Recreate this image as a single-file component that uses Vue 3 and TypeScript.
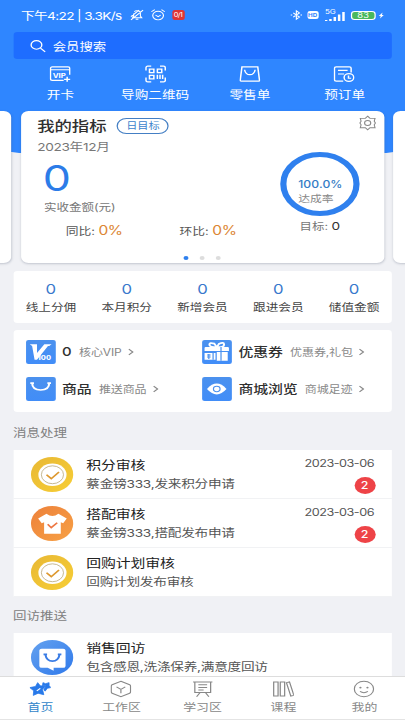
<script setup lang="ts">
interface Stat { label: string; value: number }
interface Shortcut { icon: string; title: string; note: string }
interface Message { icon: string; title: string; detail: string; date?: string; count?: number }

const actions = [
  { icon: 'vip', label: '开卡' },
  { icon: 'qr', label: '导购二维码' },
  { icon: 'bag', label: '零售单' },
  { icon: 'order', label: '预订单' },
]
const stats: Stat[] = ['线上分佣', '本月积分', '新增会员', '跟进会员', '储值金额'].map(label => ({ label, value: 0 }))
const shortcuts: Shortcut[] = [
  { icon: 'v100', title: '0', note: '核心VIP' },
  { icon: 'gift', title: '优惠券', note: '优惠券,礼包' },
  { icon: 'goods', title: '商品', note: '推送商品' },
  { icon: 'eye', title: '商城浏览', note: '商城足迹' },
]
const messages: Message[] = [
  { icon: 'check', title: '积分审核', detail: '蔡金镑333,发来积分申请', date: '2023-03-06', count: 2 },
  { icon: 'shirt', title: '搭配审核', detail: '蔡金镑333,搭配发布申请', date: '2023-03-06', count: 2 },
  { icon: 'check', title: '回购计划审核', detail: '回购计划发布审核' },
]
const tabs = [
  { icon: 'home', label: '首页' },
  { icon: 'work', label: '工作区' },
  { icon: 'study', label: '学习区' },
  { icon: 'course', label: '课程' },
  { icon: 'mine', label: '我的' },
]
</script>

<template>
  <div class="screen">
    <header class="top">
      <div class="status">
        <span class="clock">下午4:22 | 3.3K/s</span>
        <svg class="s-mute" viewBox="0 0 24 24"><path d="M5 17h14l-2-3V9a5 5 0 0 0-9-3M7 9v5l-2 3M10 20h4M3 21 21 3M3 15 15 3" /></svg>
        <svg class="s-alarm" viewBox="0 0 24 24"><circle cx="12" cy="13" r="8" /><path d="m8 12 4 3 4-3M2 6l5-4M22 6l-5-4" /></svg>
        <span class="red-tag">0/1</span>
        <span class="grow"></span>
        <svg class="s-bt" viewBox="0 0 24 24"><path d="m6 7 12 10-6 5V2l6 5L6 17M1 12h3M20 12h3" /></svg>
        <span class="hd">HD</span>
        <svg class="s-signal" viewBox="0 0 18 14"><text x="0" y="6">5G</text><path d="M1 13v-1M4.500 13v-2M8 13V9M11.500 13V6.500M15 13V4" /></svg>
        <span class="battery">83</span>
        <svg class="s-bolt" viewBox="0 0 10 14"><path d="M7 1 1 8h3l-1 5 6-7H6z" /></svg>
      </div>
      <div class="search">
        <svg viewBox="0 0 24 24"><circle cx="10" cy="10" r="8" /><path d="m16 16 7 7" /></svg>
        <span>会员搜索</span>
      </div>
      <nav class="actions">
        <div v-for="a in actions" :key="a.label" class="action">
          <svg v-if="a.icon === 'vip'" viewBox="0 0 24 24"><path d="M23 13V4a2 2 0 0 0-2-2H3a2 2 0 0 0-2 2v15a2 2 0 0 0 2 2h13M1 6h22M20 16v7M16.500 19.500h7" /><text x="3.500" y="17">VIP</text></svg>
          <svg v-else-if="a.icon === 'qr'" viewBox="0 0 24 24"><path d="M1 7V3a2 2 0 0 1 2-2h4M17 1h4a2 2 0 0 1 2 2v4M1 17v4a2 2 0 0 0 2 2h4M17 23h4a2 2 0 0 0 2-2v-4M5 5h5v5H5zM14 5h5v5h-5zM5 14h5v5H5zM14 13v6M17 13v6M20 13v6" /></svg>
          <svg v-else-if="a.icon === 'bag'" viewBox="0 0 24 24"><path d="M3 2h18l2 19q0 1-1 1H2q-1 0-1-1zM6 6q1 7 6 7t6-7" /></svg>
          <svg v-else viewBox="0 0 24 24"><path d="M11 22H3a2 2 0 0 1-2-2V4a2 2 0 0 1 2-2h15a2 2 0 0 1 2 2v6M5 7h11M5 12h7" /><circle cx="17.500" cy="17" r="5.500" /><path d="M17 14v4h3" /></svg>
          <span>{{ a.label }}</span>
        </div>
      </nav>
    </header>

    <section class="carousel">
      <div class="side"></div>
      <article class="target">
        <div class="target-main">
          <div class="target-title"><h2>我的指标</h2><span class="pill">日目标</span></div>
          <div class="month">2023年12月</div>
          <div class="amount">0</div>
          <div class="amount-label">实收金额(元)</div>
          <div class="ratios"><span>同比: <b>0%</b></span><span>环比: <b>0%</b></span></div>
        </div>
        <div class="target-side">
          <svg class="gear" viewBox="0 0 24 24"><path d="m12 1 3 3.500h6.500L20.500 9l1.500 3-1.500 3 1 4.500H15L12 23l-3-3.500H2.500L3.500 15 2 12l1.500-3-1-4.500H9z" /><circle cx="12" cy="12" r="4" /></svg>
          <div class="ring"><strong>100.0%</strong><span>达成率</span></div>
          <div class="goal">目标: <b>0</b></div>
        </div>
        <div class="dots"><i class="on"></i><i></i><i></i></div>
      </article>
      <div class="side"></div>
    </section>

    <section class="stats">
      <div v-for="s in stats" :key="s.label"><b>{{ s.value }}</b><span>{{ s.label }}</span></div>
    </section>

    <section class="shortcuts">
      <div v-for="s in shortcuts" :key="s.title" class="shortcut">
        <svg class="tile" viewBox="0 0 24 24">
          <template v-if="s.icon === 'v100'"><path class="fill" d="M3 4h6v9l6-9h6l-2 2h-1L9 20H7L5 6z" /><text x="9.500" y="20">100</text></template>
          <template v-else-if="s.icon === 'gift'"><path class="fill" d="M3 7h18q1 0 1 1v3H2V8q0-1 1-1zM12 12h9v9h-9zM2 13h9v7H2z" /><path class="line" d="M12 7Q6 7 6 4.500t4-1l2 3.500 2-3.500q4-2 4 1T12 7" /><path class="blue" d="M15.500 7v14M4 15h3M4 17h3M5.500 14v5M9 13v7" /></template>
          <path v-else-if="s.icon === 'goods'" class="line" d="M5 6q0 7 7 7t7-7M3.500 6h3M17.500 6h3" />
          <template v-else><path class="fill" d="M4 12q8-11 16 0-8 11-16 0" /><circle class="blue" cx="12" cy="12" r="2.700" /></template>
        </svg>
        <strong>{{ s.title }}</strong><span>{{ s.note }}</span>
        <svg class="arrow" viewBox="0 0 6 10"><path d="m1 1.500 4 3.500-4 3.500" /></svg>
      </div>
    </section>

    <h3 class="heading">消息处理</h3>
    <section class="list">
      <div v-for="m in messages" :key="m.title" class="row">
        <svg class="avatar" :class="m.icon" viewBox="0 0 36 36">
          <template v-if="m.icon === 'check'"><circle cx="18" cy="18.500" r="11.800" fill="#fff" /><circle cx="18" cy="18.500" r="9.300" fill="none" stroke="#bdae82" stroke-width=".8" /><path d="m13 18.500 4 4 6.500-7" fill="none" stroke="#dd982f" stroke-width="1.500" /></template>
          <template v-else><path d="M13 8q5 5 10 0l7 5-3 5-2-1v12H11V17l-2 1-3-5z" fill="#fff" /><path d="m14 19 3 3.500 5-5" fill="none" stroke="#ed7744" stroke-width="1.500" /></template>
        </svg>
        <div class="copy"><strong>{{ m.title }}</strong><span>{{ m.detail }}</span></div>
        <div v-if="m.date" class="meta"><time>{{ m.date }}</time><b>{{ m.count }}</b></div>
      </div>
    </section>

    <h3 class="heading second">回访推送</h3>
    <section class="list last">
      <div class="row">
        <svg class="avatar visit" viewBox="0 0 36 36"><path d="M9 9h18q2 0 2 2v16q0 2-2 2h-8v3l-5-3H9q-2 0-2-2V11q0-2 2-2z" fill="#fff" /><path d="M12 15q1 7 6 7t6-7M10.500 15h3M22.500 15h3" fill="none" stroke="#397ce5" stroke-width="1.700" /></svg>
        <div class="copy"><strong>销售回访</strong><span>包含感恩,洗涤保养,满意度回访</span></div>
      </div>
    </section>

    <footer class="tabs">
      <div v-for="t in tabs" :key="t.label" class="tab" :class="{ active: t.icon === 'home' }">
        <svg v-if="t.icon === 'home'" class="home" viewBox="0 0 24 24"><path class="star" d="m9 3 3 4.500 6 .5-3.500 4.500L16 20l-6.500-2L4 21l.5-6.500L0 10l6.500-1.500z" /><path class="star" d="m15 3 3 1.500L22 3v4l2 3-4 1-2.500 4-1.500-2 2.500-5.500h-4z" /><path class="cut" d="m8 14.500 4-3.500" /></svg>
        <svg v-else-if="t.icon === 'work'" viewBox="0 0 24 24"><path d="M12 1 22 6q1 .5 1 2v8q0 1.500-1 2l-10 5-10-5q-1-.5-1-2V8q0-1.500 1-2zM7 9l5 3.500L17 9M12 12.500V18" /></svg>
        <svg v-else-if="t.icon === 'study'" viewBox="0 0 24 24"><path d="M1 2h22M3 2v15h18V2M7 6h10M7 10h10M7 13.500h6M9 17l-4 6M15 17l4 6" /></svg>
        <svg v-else-if="t.icon === 'course'" viewBox="0 0 24 24"><path d="M1 2h5v20H1zM8.500 2h5v20h-5zM15.500 3l3.500-1 5 19-3.500 1z" /></svg>
        <svg v-else viewBox="0 0 24 24"><circle cx="12" cy="12" r="11" /><path d="M7.500 15.500q4.500 3.500 9 0" /><circle class="dot" cx="8" cy="10" r="1.300" /><circle class="dot" cx="16" cy="10" r="1.300" /></svg>
        <span>{{ t.label }}</span>
      </div>
    </footer>
  </div>
</template>

<style>
html, body { margin: 0; width: 405px; height: 720px; overflow: hidden; background: #f0f1f5; }
</style>

<style scoped>
* { box-sizing: border-box; }
/* The interface uses wide proportions: one unit across is 1.24 units down. */
.screen {
  width: 326.6px; height: 720px; overflow: hidden; display: flex; flex-direction: column;
  transform: scaleX(1.24); transform-origin: 0 0;
  font-family: Inter, "Noto Sans CJK SC", sans-serif; color: #333;
  background: radial-gradient(ellipse 300px 60px at 50% 101px, #2f86ff 99%, transparent 100%) no-repeat, #f0f1f5;
}
svg { display: block; flex: none; fill: none; stroke: currentColor; stroke-width: 1.7; }
h2, h3 { margin: 0; font-weight: 500; }
b { font-weight: 400; }
.top { height: 111px; flex: none; background: #2f86ff; color: #fff; }
.status { height: 32px; padding: 0 16.500px 2px 17px; display: flex; align-items: center; font-size: 11px; }
.clock { font-size: 11px; letter-spacing: -.52px; white-space: nowrap; width: 84.500px; }
.s-mute { width: 13px; height: 14px; margin-left: 2px; }
.s-alarm { width: 13px; height: 14px; margin-left: 4.500px; }
.red-tag { margin-left: 4.500px; width: 10px; height: 10px; border-radius: 2px; background: #df3535; font-size: 6px; line-height: 10px; text-align: center; letter-spacing: -.5px; }
.grow { flex: 1; }
.s-bt { width: 10px; height: 14px; stroke-width: 2.200; }
.hd { width: 9px; height: 8px; margin-left: 4px; border-radius: 2px; background: #fff; color: #2f86ff; font-size: 5px; font-weight: 700; line-height: 8px; text-align: center; }
.s-signal { width: 18px; height: 14px; margin-left: 5px; margin-top: -1px; stroke-width: 2; }
.s-signal text { font-size: 6.500px; fill: #fff; stroke: none; }
.battery { width: 19.500px; height: 9px; margin-left: 3.500px; border: 1px solid #fff; border-radius: 3px; background: #49b85d; font-size: 7.500px; line-height: 7px; text-align: center; }
.s-bolt { width: 5px; height: 9px; margin-left: 2.500px; fill: #fff; stroke: none; }
.search { height: 27px; margin: 0 10.500px; padding-left: 13.500px; border-radius: 3px; background: #1e6dff; display: flex; align-items: center; gap: 5.500px; font-size: 10.800px; }
.search svg { width: 13px; height: 14px; stroke-width: 2; }
.actions { display: flex; padding: 6px 10.500px 0; }
.action { flex: 1; display: flex; flex-direction: column; align-items: center; font-size: 11px; line-height: 16px; }
.action svg { width: 17px; height: 18px; margin-bottom: 4px; }
.action text { font-size: 9px; font-weight: 700; fill: #fff; stroke: none; }
.carousel { flex: none; height: 152px; display: flex; justify-content: center; gap: 7.800px; }
.side, .target { background: #fff; border-radius: 6px; box-shadow: 0 1px 2px rgba(60, 70, 100, .25); }
.side { width: 20px; flex: none; }
.target { flex: none; width: 292.700px; display: grid; grid-template-columns: 1fr 103.400px; grid-template-rows: 143px 8px; }
.target-main { padding-left: 13px; }
.target-title { height: 29px; display: flex; align-items: center; gap: 8.300px; }
.target-title h2 { font-size: 14px; line-height: 20px; color: #303030; }
.pill { height: 16px; width: 42px; border: 1px solid #447fc4; border-radius: 8px; text-align: center; font-size: 9px; line-height: 14px; color: #3c83cc; }
.month { height: 15px; font-size: 11px; line-height: 15px; letter-spacing: -.25px; color: #777; }
.amount { height: 45px; padding-left: 4.500px; font-size: 36px; line-height: 47px; color: #2c7ce8; }
.amount-label { height: 15px; padding-left: 5.500px; font-size: 10.100px; line-height: 15px; color: #777; }
.ratios { display: flex; gap: 46px; padding: 6px 0 0 23px; font-size: 10.300px; line-height: 20px; color: #555; white-space: nowrap; }
.ratios b { font-size: 12.500px; letter-spacing: -.4px; color: #dc8532; }
.target-side { display: flex; flex-direction: column; align-items: center; }
.gear { width: 15px; height: 16px; margin: 4px 5.500px 0 0; align-self: flex-end; color: #888; stroke-width: 1.400; }
.ring { width: 64px; height: 64px; margin-top: 21px; padding-top: 15px; border: 5px solid #2f80ee; border-radius: 50%; display: flex; flex-direction: column; justify-content: center; padding-left: 9.500px; line-height: 14px; white-space: nowrap; }
.ring strong { font-size: 9.800px; font-weight: 500; color: #347cc5; letter-spacing: .1px; }
.ring span { font-size: 9.500px; color: #888; }
.goal { margin-top: 3px; font-size: 10px; line-height: 15px; color: #777; }
.goal b { font-size: 11px; color: #333; }
.dots { grid-column: 1 / 3; display: flex; justify-content: center; align-items: center; gap: 9px; }
.dots i { width: 4px; height: 4px; border-radius: 50%; background: #ddd; }
.dots .on { background: #2f80ee; }
.stats { flex: none; height: 52px; margin: 8px 10.500px 0; border-radius: 3px; background: #fff; display: grid; grid-template-columns: repeat(5, 1fr); }
.stats div { display: flex; flex-direction: column; align-items: center; padding-top: 9px; }
.stats b { font-size: 13.500px; line-height: 18px; color: #3878cc; }
.stats span { font-size: 10.200px; line-height: 18px; color: #444; }
.shortcuts { flex: none; height: 82px; margin: 7px 10.500px 0; padding: 3px 10px 5px 10.500px; border-radius: 3px; background: #fff; display: grid; grid-template-columns: 142.300px 1fr; grid-template-rows: 37px 37px; }
.shortcut { display: flex; align-items: center; white-space: nowrap; }
.tile { width: 23.600px; height: 24px; margin-right: 5.500px; border-radius: 2px; background: linear-gradient(#4b91ee, #418df8); }
.tile .fill { fill: #fff; stroke: none; }
.tile .line { stroke: #fff; stroke-width: 1.700; }
.tile .blue { stroke: #4b91ee; stroke-width: 1; }
.tile text { fill: #fff; stroke: none; font-size: 6px; font-weight: 800; }
.shortcut strong { font-size: 12px; font-weight: 500; letter-spacing: -.15px; color: #303030; }
.shortcut span { font-size: 9.700px; letter-spacing: -.1px; margin-left: 6px; color: #888; }
.arrow { width: 5px; height: 8px; margin-left: 4.500px; color: #888; stroke-width: 1.300; }
.heading { flex: none; height: 38px; padding: 2px 0 0 10.500px; font-size: 10.900px; font-weight: 400; line-height: 38px; color: #808080; }
.list { flex: none; margin: 0 10.500px; background: #fff; }
.row { height: 49px; padding: 0 14.500px 0 14px; display: flex; align-items: flex-start; border-bottom: 1px solid #f1f2f4; }
.avatar { width: 34.600px; height: 34.600px; margin: 7px 10.500px 0 0; border-radius: 50%; stroke: none; }
.check { background: linear-gradient(135deg, #e8b835, #f7ce35); }
.shirt { background: linear-gradient(135deg, #ed813b, #f7a044); }
.visit { background: linear-gradient(135deg, #65a2ef, #2f79eb); }
.copy { display: flex; flex-direction: column; padding-top: 6px; white-space: nowrap; }
.copy strong { font-size: 12px; font-weight: 400; letter-spacing: -.1px; line-height: 19px; color: #222; }
.copy span { font-size: 11px; letter-spacing: -.2px; line-height: 19px; color: #555; }
.meta { margin-left: auto; display: flex; flex-direction: column; align-items: flex-end; }
.meta time { padding-top: 4px; font-size: 10.200px; letter-spacing: -.4px; line-height: 18px; color: #555; }
.meta b { margin-top: 5px; margin-right: -1px; width: 17px; height: 17px; border-radius: 50%; background: #ee4347; color: #fff; font-size: 10px; font-weight: 500; line-height: 17px; text-align: center; }
.second { height: 36px; line-height: 36px; padding-top: 1px; }
.last { height: 43px; overflow: hidden; }
.tabs { flex: none; height: 44px; border-top: 1px solid #ddd; border-bottom: 1px solid #e4e4e4; background: #fff; display: grid; grid-template-columns: repeat(5, 1fr); }
.tab { display: flex; flex-direction: column; align-items: center; padding-top: 3px; font-size: 10.400px; line-height: 16px; color: #888; }
.tab svg { width: 17px; height: 18px; margin-bottom: 2px; stroke-width: 1.400; }
.active { color: #3185c9; }
.star { fill: #2879e9; stroke: #2879e9; stroke-width: 1; stroke-linejoin: round; }
.cut { stroke: #fff; }
.dot { fill: #888; stroke: none; }
</style>
